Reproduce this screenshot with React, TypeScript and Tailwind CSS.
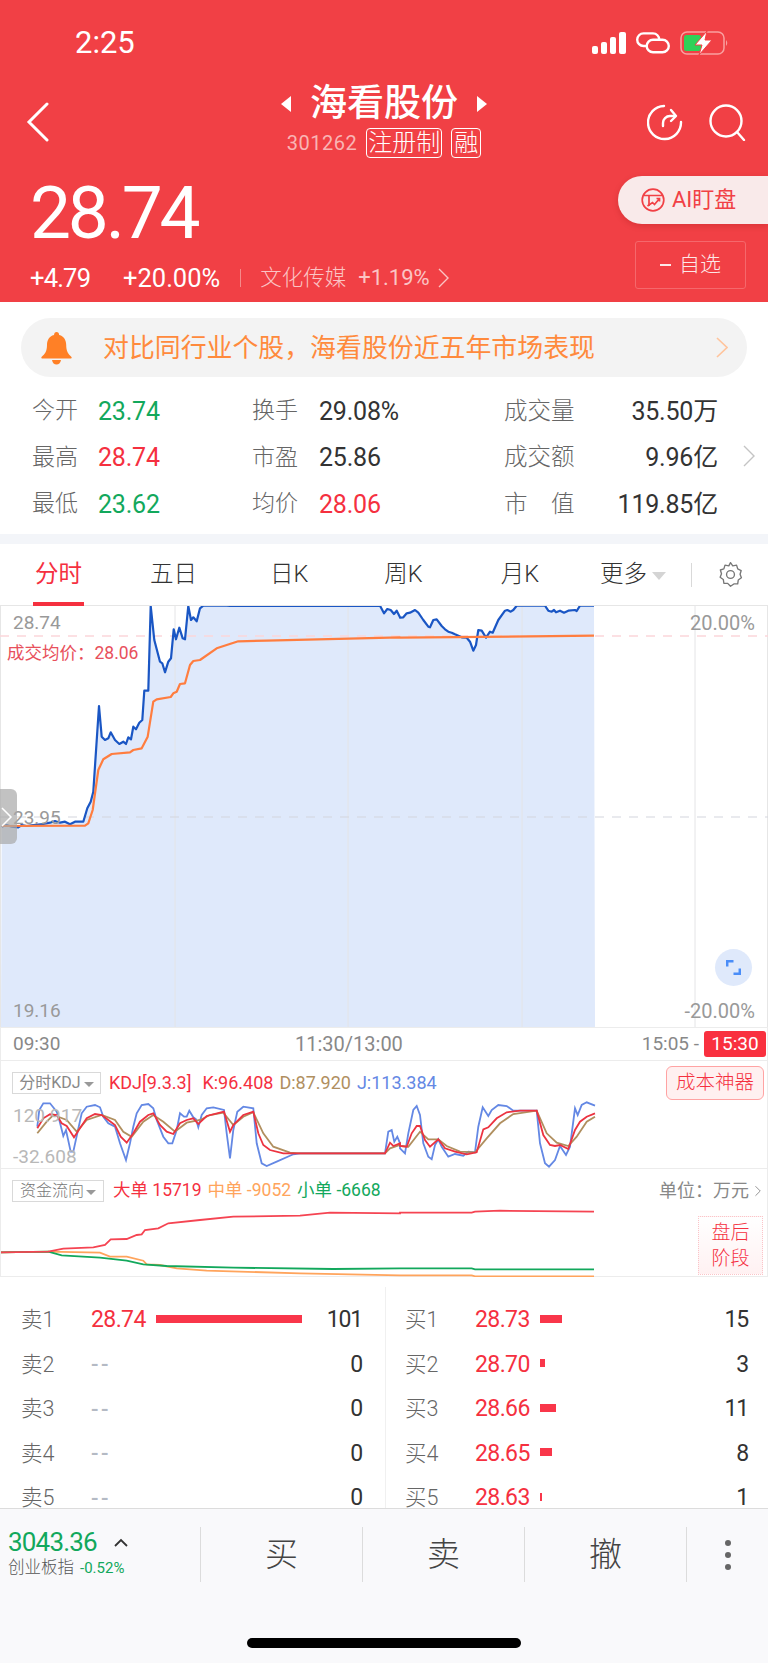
import React from 'react';
import { ChevronRight } from 'lucide-react';

const toPoints = (parts: [number[], number, number][]) =>
  parts
    .map(([flat, ox, oy]) => {
      const out: string[] = [];
      for (let i = 0; i < flat.length; i += 2) {
        out.push(`${(flat[i] / 3 + ox).toFixed(1)},${(flat[i + 1] / 3 + oy).toFixed(1)}`);
      }
      return out.join(' ');
    })
    .join(' ');

const priceLine = toPoints([
  [[5,680,20,675,35,680,55,682,65,675,80,678,100,675,130,672,150,668,165,663,180,668,195,665,210,673,225,665,250,665,262,625,272,605,280,575,297,318,305,410,315,420,325,415,332,397,345,420,358,432,370,425,378,432,385,412,393,418,400,380,408,388,418,368,427,360,433,272,445,272,452,18,463,120,480,185,487,190,495,217,505,185,513,175,521,88,528,118,538,83,548,115,555,118,565,18,573,60,580,52,590,64,600,25,610,17,680,17,690,18,1140,17,1152,40,1162,27,1172,30,1182,42,1190,32,1200,52], 0, 600],
  [[0,53,10,52,20,40,30,38,45,30,55,38,70,60,85,80,90,82,100,60,110,58,125,78,135,88,145,95,155,98,165,103,185,112,200,113,210,125,220,152,228,135,235,90,245,92,258,113,270,95,278,98,295,60,315,32,322,30,332,35,340,30,350,17,435,17,445,32,455,35,462,30,468,37,480,32,492,38,505,32,525,30,530,33,540,17,582,17], 400, 600],
]);
const avgLine = toPoints([
  [[5,678,255,677,265,670,278,630,295,510,310,478,335,462,390,457,400,450,425,445,443,410,460,305,470,298,512,291,520,280,530,275,540,252,555,250,570,195,580,183,600,180,650,145,680,135,715,124,800,122,1200,112], 0, 600],
  [[0,113,582,107], 400, 600],
]);
const kdjJ = toPoints([
  [[112,320,118,270,130,250,150,250,170,275,178,300,190,348,198,330,212,395,220,395,232,340,245,280,260,260,285,255,300,262,310,290,325,310,345,320,360,370,378,420,390,370,400,320,410,280,425,255,445,252,460,265,470,300,490,350,505,370,517,370,530,330,540,280,552,290,560,290,568,272,580,292,588,298,595,322,605,285,620,265,640,262,672,270,680,340,690,415,700,330,712,275,730,260,760,265,770,370,785,430,800,438,830,425,880,403,900,400,1155,400,1165,335,1175,330,1183,365,1192,350,1200,370], 0, 1020],
  [[0,385,15,400,25,340,40,270,50,258,60,285,70,370,85,410,95,418,105,375,115,358,125,380,145,410,165,402,190,407,205,395,225,397,235,320,248,262,265,288,275,270,295,255,320,258,340,272,410,272,420,370,435,430,447,440,465,420,480,378,498,405,510,380,525,265,533,285,545,255,560,247,585,257], 400, 1020],
]);
const kdjK = toPoints([
  [[112,325,130,295,150,283,170,285,185,310,200,318,222,352,240,325,260,295,285,282,305,285,325,300,345,315,362,350,380,368,400,340,420,305,445,285,460,280,480,315,500,335,520,342,540,310,560,300,580,295,595,312,620,288,672,275,690,335,700,315,730,285,760,275,775,340,790,375,810,390,850,400,1155,400,1170,368,1180,378,1200,370], 0, 1020],
  [[0,378,20,380,35,340,50,318,60,318,75,360,90,380,115,358,135,385,165,395,200,403,230,397,250,328,265,322,290,295,320,277,360,272,410,272,430,345,450,375,465,378,480,375,505,387,525,330,540,305,560,290,585,280], 400, 1020],
]);
const kdjD = toPoints([
  [[112,340,140,305,160,285,200,300,230,335,260,300,305,285,345,300,370,335,395,350,430,305,460,285,490,305,525,335,560,308,600,300,630,285,670,278,700,315,730,290,760,277,790,340,820,380,870,398,900,400,1155,400,1170,385,1200,375], 0, 1020],
  [[0,378,25,380,60,335,85,358,115,358,140,378,180,395,225,397,260,355,300,310,340,282,410,272,440,340,470,368,505,378,530,350,560,305,585,290], 400, 1020],
]);
const flowBig = toPoints([
  [[3,697,145,695,190,686,280,682,315,675,332,658,380,657,410,645,425,643,435,630,475,625,505,610,600,600,700,590,900,587,990,578,1200,580], 0, 1020],
  [[0,578,215,578,225,575,300,572,582,575], 400, 1020],
]);
const flowMid = toPoints([
  [[3,697,145,695,300,698,330,710,380,710,430,722,440,733,480,735,530,745,620,752,900,760,1200,766], 0, 1020],
  [[0,766,215,766,225,769,582,769], 400, 1020],
]);
const flowSmall = toPoints([
  [[3,697,145,695,185,706,300,713,380,722,430,733,500,738,700,743,1000,747,1200,745], 0, 1020],
  [[0,745,215,745,225,748,582,748], 400, 1020],
]);

const stats = [
  { a: '今开', av: '23.74', ac: 'text-[#12a85c]', b: '换手', bv: '29.08%', bc: 'text-[#333]', c: '成交量', cv: '35.50万' },
  { a: '最高', av: '28.74', ac: 'text-[#f5303f]', b: '市盈', bv: '25.86', bc: 'text-[#333]', c: '成交额', cv: '9.96亿' },
  { a: '最低', av: '23.62', ac: 'text-[#12a85c]', b: '均价', bv: '28.06', bc: 'text-[#f5303f]', c: '市　值', cv: '119.85亿' },
];

const sells = [
  { label: '卖1', price: '28.74', bar: 146, qty: '101' },
  { label: '卖2', price: '--', bar: 0, qty: '0' },
  { label: '卖3', price: '--', bar: 0, qty: '0' },
  { label: '卖4', price: '--', bar: 0, qty: '0' },
  { label: '卖5', price: '--', bar: 0, qty: '0' },
];
const buys = [
  { label: '买1', price: '28.73', bar: 22, qty: '15' },
  { label: '买2', price: '28.70', bar: 5, qty: '3' },
  { label: '买3', price: '28.66', bar: 16, qty: '11' },
  { label: '买4', price: '28.65', bar: 12, qty: '8' },
  { label: '买5', price: '28.63', bar: 2, qty: '1' },
];

const BookSide = ({ rows, className }: { rows: typeof sells; className: string }) => (
  <div className={className}>
    {rows.map((r) => (
      <div key={r.label} className="flex h-[44.5px] shrink-0 items-center">
        <span className="w-[70px] text-[21.5px] font-light text-[#666]">{r.label}</span>
        <span className={`w-[65px] ${r.price === '--' ? 'text-[22px] font-medium tracking-[2.5px] text-[#b4bac4]' : 'text-[23px] tracking-[-0.6px] text-[#f5303f]'}`}>{r.price}</span>
        <div className="flex-1">
          {r.bar > 0 && <div className="mb-[3px] h-[8px] bg-[#f9364a]" style={{ width: r.bar }} />}
        </div>
        <span className="text-[23px] tracking-[-1.2px] text-[#333]">{r.qty}</span>
      </div>
    ))}
  </div>
);

const Tab = ({ label, x, active }: { label: string; x: string; active?: boolean }) => (
  <div className={`relative flex h-full items-center text-[23.5px] font-light ${x} ${active ? 'font-normal text-[#f5303f]' : 'text-[#333]'}`}>
    {label}
    {active && <span className="absolute bottom-[-1px] left-[-2px] right-[-2px] h-[4px] bg-[#f5303f]" />}
  </div>
);

const Chevron = ({ w, h, color, sw = 1.4 }: { w: number; h: number; color: string; sw?: number }) => (
  <svg width={w} height={h} viewBox={`0 0 ${w} ${h}`} fill="none" stroke={color} strokeWidth={sw}>
    <path d={`M1 1 ${w - 1} ${h / 2} 1 ${h - 1}`} />
  </svg>
);

export default function App() {
  return (
    <div className="flex h-[1663px] w-[768px] flex-col overflow-hidden bg-white font-['Roboto','Noto_Sans_CJK_SC',sans-serif]">
      {/* header */}
      <header className="h-[302px] shrink-0 bg-[#f14045] text-white">
        <div className="flex h-[84px] items-start justify-between pl-[75px] pr-[39px] pt-[28px]">
          <span className="text-[31px] leading-[29px]">2:25</span>
          <div className="flex items-center gap-[10px] pt-[3px]">
            <svg width="34" height="22" viewBox="0 0 34 22" fill="#fff">
              <rect x="0" y="14" width="6" height="8" rx="2" />
              <rect x="9" y="10" width="6" height="12" rx="2" />
              <rect x="18" y="5" width="6" height="17" rx="2" />
              <rect x="27" y="0" width="7" height="22" rx="2" />
            </svg>
            <svg width="34" height="22" viewBox="0 0 34 22" fill="none" stroke="#fff" strokeWidth="2.4">
              <path d="M11 14H7.500a6.300 6.300 0 0 1 0-12.600H17a6.300 6.300 0 0 1 6.300 6.300" />
              <path d="M10.700 14a6.300 6.300 0 0 1 6.300-6.300h9.500a6.300 6.300 0 0 1 0 12.600H17a6.300 6.300 0 0 1-6.300-6.300Z" />
            </svg>
            <svg width="49" height="24" viewBox="0 0 49 24" fill="none">
              <rect x="1" y="1" width="43" height="22" rx="6" stroke="#f9a0a0" strokeWidth="1.5" />
              <rect x="4" y="4" width="17" height="16" rx="2.5" fill="#2fd158" />
              <path d="M46 9q2.5 3 0 6z" fill="#f9a0a0" />
              <path d="M27 0 15 14h7l-3 10 13-15h-7z" fill="#fff" stroke="#f14045" strokeWidth="1" />
            </svg>
          </div>
        </div>
        <div className="grid h-[92px] grid-cols-[1fr_auto_1fr] items-start">
          <div className="pl-[24px] pt-[18px]">
            <svg width="30" height="40" viewBox="0 0 30 40" fill="none" stroke="#fff" strokeWidth="3" strokeLinecap="round">
              <path d="M23 2 5 20l18 18" />
            </svg>
          </div>
          <div className="flex flex-col items-center">
            <div className="flex items-center gap-[19px]">
              <span className="h-0 w-0 border-y-[8px] border-r-[10px] border-y-transparent border-r-white" />
              <span className="text-[37px] font-medium leading-[40px]">海看股份</span>
              <span className="h-0 w-0 border-y-[8px] border-l-[10px] border-y-transparent border-l-white" />
            </div>
            <div className="mt-[4px] flex items-center">
              <span className="mr-[9px] text-[20px] tracking-[0.5px] text-[#f9b4b4]">301262</span>
              <span className="mr-[9px] rounded-[4px] border border-white px-[1px] text-[24px] font-light leading-[28px]">注册制</span>
              <span className="rounded-[4px] border border-white px-[2px] text-[24px] font-light leading-[28px]">融</span>
            </div>
          </div>
          <div className="flex justify-end gap-[26px] pr-[22px] pt-[20px]">
            <svg width="36" height="37" viewBox="0 0 36 37" fill="none" stroke="#fff" strokeWidth="2.4" strokeLinecap="round" strokeLinejoin="round">
              <path d="M17 2a16.5 16.5 0 1 0 17 16" />
              <path d="M16 22v-3a7 7 0 0 1 7-7h5" />
              <path d="m24 6 5 6-5 5" />
            </svg>
            <svg width="37" height="37" viewBox="0 0 37 37" fill="none" stroke="#fff" strokeWidth="2.4" strokeLinecap="round">
              <circle cx="17" cy="17" r="15.5" />
              <path d="m28 28 7 8" />
            </svg>
          </div>
        </div>
        <div className="flex items-start justify-between">
          <div className="pl-[30px]">
            <div className="mt-[-3px] text-[73px] leading-[80px] tracking-[-3.2px]">28.74</div>
            <div className="mt-[10px] flex items-center text-[25.5px] leading-[30px]">
              <span className="w-[93px] tracking-[-0.8px]">+4.79</span>
              <span>+20.00%</span>
              <span className="ml-[20px] mr-[19px] h-[18px] w-px bg-[#f58a8a]" />
              <span className="text-[21.5px] font-light text-[#fbc4c4]">文化传媒</span>
              <span className="ml-[12px] text-[22px] text-[#fbc4c4]">+1.19%</span>
              <span className="ml-[8px]">
                <Chevron w={11} h={20} color="#fbc4c4" />
              </span>
            </div>
          </div>
          <div className="flex w-[150px] flex-col items-end">
            <div className="flex h-[48px] w-[150px] items-center rounded-l-[24px] bg-[#f9eaea] pl-[23px] text-[#f14045] shadow-[0_2px_6px_rgba(120,0,0,0.2)]">
              <svg width="24" height="24" viewBox="0 0 24 24" fill="none" stroke="#f14045" strokeWidth="1.7">
                <circle cx="12" cy="12" r="10.8" />
                <path d="M3 7.5h18M8 7.5V18" />
                <path d="m6.500 18 5-3.500 2 2 5-6M15.500 10.500h3v3" />
              </svg>
              <span className="ml-[7px] text-[22px] leading-none">AI盯盘</span>
            </div>
            <div className="mr-[22px] mt-[17px] flex h-[48px] w-[111px] items-center justify-center gap-[8px] rounded-[3px] border border-[#f5686c] text-[21px] font-light text-[#fde8e8]">
              <span className="h-[2px] w-[11px] bg-[#fde8e8]" />
              自选
            </div>
          </div>
        </div>
      </header>

      {/* alert */}
      <div className="px-[21px] pt-[16px]">
        <div className="flex h-[59px] items-center rounded-[30px] bg-[#f3f3f3] pl-[20px] pr-[19px]">
          <svg width="31" height="34" viewBox="0 0 31 34" fill="#ff8026">
            <path d="M15.500 1c1.700 0 2.500 1 2.700 3 5 1.200 7 5.500 7 10 0 6 2 9 5.300 12 .5.800 0 1.500-1 1.500H1.500c-1 0-1.500-.7-1-1.500C4 23 6 20 6 14c0-4.500 2-8.800 7-10 .2-2 1-3 2.500-3Z" />
            <path d="M11 29h9c-.5 3-2.300 4.500-4.500 4.500S11.500 32 11 29Z" />
          </svg>
          <span className="ml-[31px] flex-1 pt-[2px] text-[25.9px] leading-none text-[#ff8a3c]">对比同行业个股，海看股份近五年市场表现</span>
          <Chevron w={12} h={21} color="#ffc49c" sw={1.6} />
        </div>
      </div>

      {/* stats */}
      <div className="relative flex h-[157px] shrink-0 flex-col px-[32px] pt-[11px]">
        {stats.map((s) => (
          <div key={s.a} className="flex h-[46.5px] items-center">
            <span className="w-[66px] text-[23px] font-light text-[#666]">{s.a}</span>
            <span className={`w-[154px] text-[25px] tracking-[-0.2px] ${s.ac}`}>{s.av}</span>
            <span className="w-[67px] text-[23px] font-light text-[#666]">{s.b}</span>
            <span className={`w-[185px] text-[25px] tracking-[-0.2px] ${s.bc}`}>{s.bv}</span>
            <span className="w-[71px] text-[23.5px] font-light text-[#666]">{s.c}</span>
            <span className="flex-1 text-right text-[25px] tracking-[-0.2px] text-[#333]">{s.cv}</span>
            <span className="w-[18px]" />
          </div>
        ))}
        <div className="absolute right-[13px] top-[68px]">
          <Chevron w={12} h={22} color="#c4c4c4" />
        </div>
      </div>
      <div className="h-[10px] shrink-0 bg-[#f3f5f9]" />

      {/* tabs */}
      <div className="flex h-[62px] shrink-0 items-center border-b border-[#e6e6e6]">
        <Tab label="分时" x="ml-[35px]" active />
        <Tab label="五日" x="ml-[68px]" />
        <Tab label="日K" x="ml-[73px]" />
        <Tab label="周K" x="ml-[76px]" />
        <Tab label="月K" x="ml-[78px]" />
        <Tab label="更多" x="ml-[61px]" />
        <span className="ml-[5px] mt-[3px] h-0 w-0 border-x-[7px] border-t-[8px] border-x-transparent border-t-[#d4d4d4]" />
        <span className="ml-[25px] h-[24px] w-px bg-[#d9d9d9]" />
        <svg className="ml-[25px]" width="27" height="27" viewBox="0 0 24 24" fill="none" stroke="#777" strokeWidth="1.2" strokeLinejoin="round">
          <path d="M12 1.500 14 4.300l3.400-.6 1 3.300 3.100 1.500-1 3.300 1.200 3.100-2.800 2-.5 3.400-3.400.1L12 22.500l-2.500-2.600-3.400-.1-.5-3.400-2.800-2 1.200-3.100-1-3.300L6.100 7l1-3.300 3.400.6z" />
          <circle cx="12" cy="12" r="3.5" />
        </svg>
      </div>

      {/* price chart */}
      <div className="relative h-[421px] shrink-0 border-x border-[#e6e6e6] text-[19px] leading-none text-[#999]">
        <svg className="absolute left-[-1px] top-0" width="768" height="421" viewBox="0 606 768 421" fill="none">
          <polygon points={`${priceLine} 595,1027 1,1027`} fill="#dfe9fb" />
          {[175, 348, 522, 695].map((x) => (
            <line key={x} x1={x} x2={x} y1="606" y2="1027" stroke="#e4e4e6" strokeWidth="1" />
          ))}
          <line x1="0" x2="768" y1="636" y2="636" stroke="#fbd6da" strokeWidth="1.5" strokeDasharray="9 8" />
          <line x1="0" x2="768" y1="817" y2="817" stroke="#d4d6de" strokeWidth="1.2" strokeDasharray="9 8" />
          <polyline points={priceLine} stroke="#1a56c4" strokeWidth="2.2" strokeLinejoin="round" />
          <polyline points={avgLine} stroke="#ff7d3f" strokeWidth="2.2" strokeLinejoin="round" />
        </svg>
        <span className="absolute left-[12px] top-[7px]">28.74</span>
        <span className="absolute right-[12px] top-[7px] text-[20px]">20.00%</span>
        <span className="absolute left-[6px] top-[39px] text-[17.5px] text-[#e8505c]">成交均价：28.06</span>
        <span className="absolute left-[12px] top-[202px]">23.95</span>
        <span className="absolute left-[12px] top-[395px]">19.16</span>
        <span className="absolute right-[12px] top-[395px] text-[20px]">-20.00%</span>
        <div className="absolute left-[-1px] top-[183px] flex h-[55px] w-[17px] items-center rounded-r-[6px] bg-[#a8a8a8]/70">
          <svg width="13" height="22" viewBox="0 0 13 22" fill="none" stroke="#fff" strokeWidth="1.5">
            <path d="m2 2 9 9-9 9" />
          </svg>
        </div>
        <div className="absolute left-[714px] top-[343px] flex h-[37px] w-[37px] items-center justify-center rounded-full bg-[#dfe9fb]">
          <svg width="15" height="15" viewBox="0 0 15 15" fill="none" stroke="#4a8df8" strokeWidth="2.5">
            <path d="M1.200 6.500V1.200h6.300M13.800 8.500v5.300H7.500" />
          </svg>
        </div>
      </div>

      {/* time axis */}
      <div className="flex h-[34px] shrink-0 items-center border-x border-y border-[#ececec] pl-[12px] pr-[1px] text-[19px] text-[#888]">
        <span className="w-[282px]">09:30</span>
        <span className="flex-1 text-[20px]">11:30/13:00</span>
        <span className="mr-[5px]">15:05 -</span>
        <span className="flex h-[26px] w-[62px] items-center justify-center rounded-[3px] bg-[#f9303f] text-white">15:30</span>
      </div>

      {/* kdj */}
      <div className="relative h-[108px] shrink-0 border-x border-b border-[#ececec]">
        <svg className="absolute left-[-1px] top-0" width="768" height="108" viewBox="0 1061 768 108" fill="none">
          <polyline points={kdjJ} stroke="#6488e4" strokeWidth="1.8" />
          <polyline points={kdjD} stroke="#b08f5f" strokeWidth="1.8" />
          <polyline points={kdjK} stroke="#ec3340" strokeWidth="1.8" />
        </svg>
        <div className="relative flex items-center pl-[11px] pt-[11px] text-[18px] leading-none">
          <span className="flex h-[22px] w-[89px] items-center justify-center gap-[3px] border border-[#d9d9d9] text-[16px] text-[#888]">
            分时KDJ
            <span className="mt-[2px] h-0 w-0 border-x-[5px] border-t-[5px] border-x-transparent border-t-[#999]" />
          </span>
          <span className="ml-[8px] text-[#f5303f]">KDJ[9.3.3]</span>
          <span className="ml-[11px] text-[#f5303f]">K:96.408</span>
          <span className="ml-[6px] text-[#b08f5f]">D:87.920</span>
          <span className="ml-[6px] text-[#6488e4]">J:113.384</span>
        </div>
        <span className="absolute left-[12px] top-[45px] text-[19px] leading-none text-[#b8b8b8]">120.917</span>
        <span className="absolute left-[12px] top-[86px] text-[19px] leading-none text-[#b8b8b8]">-32.608</span>
        <span className="absolute left-[665px] top-[5px] flex h-[34px] w-[98px] items-center justify-center rounded-[6px] border border-[#ffa3a3] bg-[#fff0f0] text-[19.5px] font-light text-[#f5303f]">成本神器</span>
      </div>

      {/* money flow */}
      <div className="relative h-[108px] shrink-0 border-x border-b border-[#ececec]">
        <svg className="absolute left-[-1px] top-0" width="768" height="108" viewBox="0 1169 768 108" fill="none">
          <polyline points={flowMid} stroke="#ffa45c" strokeWidth="1.8" />
          <polyline points={flowSmall} stroke="#12a85c" strokeWidth="1.8" />
          <polyline points={flowBig} stroke="#f54452" strokeWidth="1.8" />
        </svg>
        <div className="relative flex items-center pl-[11px] pt-[11px] text-[17.5px] leading-none">
          <span className="flex h-[22px] w-[92px] items-center justify-center gap-[2px] border border-[#d9d9d9] text-[16px] font-light text-[#777]">
            资金流向
            <span className="mt-[2px] h-0 w-0 border-x-[5px] border-t-[5px] border-x-transparent border-t-[#999]" />
          </span>
          <span className="ml-[9px] text-[#f5303f]">大单 15719</span>
          <span className="ml-[6px] text-[#ffa45c]">中单 -9052</span>
          <span className="ml-[6px] text-[#12a85c]">小单 -6668</span>
          <span className="ml-auto flex items-center text-[18px] text-[#888]">
            单位：万元
            <ChevronRight size={18} strokeWidth={1.2} />
          </span>
        </div>
        <div className="absolute left-[697px] top-[47px] flex h-[59px] w-[65px] items-center justify-center border border-dotted border-[#fbc4c8] bg-gradient-to-b from-white to-[#fff1f2] text-center text-[19px] font-light leading-[26px] text-[#f5303f]">
          盘后<br />阶段
        </div>
      </div>

      {/* order book */}
      <div className="flex min-h-0 flex-1 overflow-hidden pt-[10px]">
        <BookSide rows={sells} className="flex w-[385px] shrink-0 flex-col pl-[21px] pr-[23px] pt-[11px]" />
        <BookSide rows={buys} className="flex flex-1 flex-col border-l border-[#f0f0f0] pl-[19px] pr-[20px] pt-[11px]" />
      </div>

      {/* bottom bar */}
      <div className="h-[155px] shrink-0 border-t border-[#dcdcdc] bg-[#f9f9fb]">
        <div className="flex h-[73px] items-end">
          <div className="h-[55px] w-[200px] pl-[8px] pt-[2px]">
            <div className="flex items-center text-[26px] leading-[27px] tracking-[-0.8px] text-[#12a85c]">
              3043.36
              <svg className="ml-[17px]" width="14" height="10" viewBox="0 0 14 10" fill="none" stroke="#333" strokeWidth="1.8">
                <path d="m1 8 6-6 6 6" />
              </svg>
            </div>
            <div className="mt-[4px] flex items-center leading-none">
              <span className="text-[16.5px] font-light text-[#555]">创业板指</span>
              <span className="ml-[6px] text-[15px] text-[#12a85c]">-0.52%</span>
            </div>
          </div>
          {['买', '卖', '撤'].map((t) => (
            <div key={t} className="flex h-[55px] w-[162px] items-center justify-center border-l border-[#dcdcdc] text-[33px] font-light text-[#444]">
              {t}
            </div>
          ))}
          <div className="flex h-[55px] flex-1 flex-col items-center justify-center gap-[6px] border-l border-[#dcdcdc]">
            <span className="h-[6px] w-[6px] rounded-full bg-[#666]" />
            <span className="h-[6px] w-[6px] rounded-full bg-[#666]" />
            <span className="h-[6px] w-[6px] rounded-full bg-[#666]" />
          </div>
        </div>
        <div className="flex justify-center pt-[56px]">
          <div className="h-[10px] w-[274px] rounded-full bg-black" />
        </div>
      </div>
    </div>
  );
}
